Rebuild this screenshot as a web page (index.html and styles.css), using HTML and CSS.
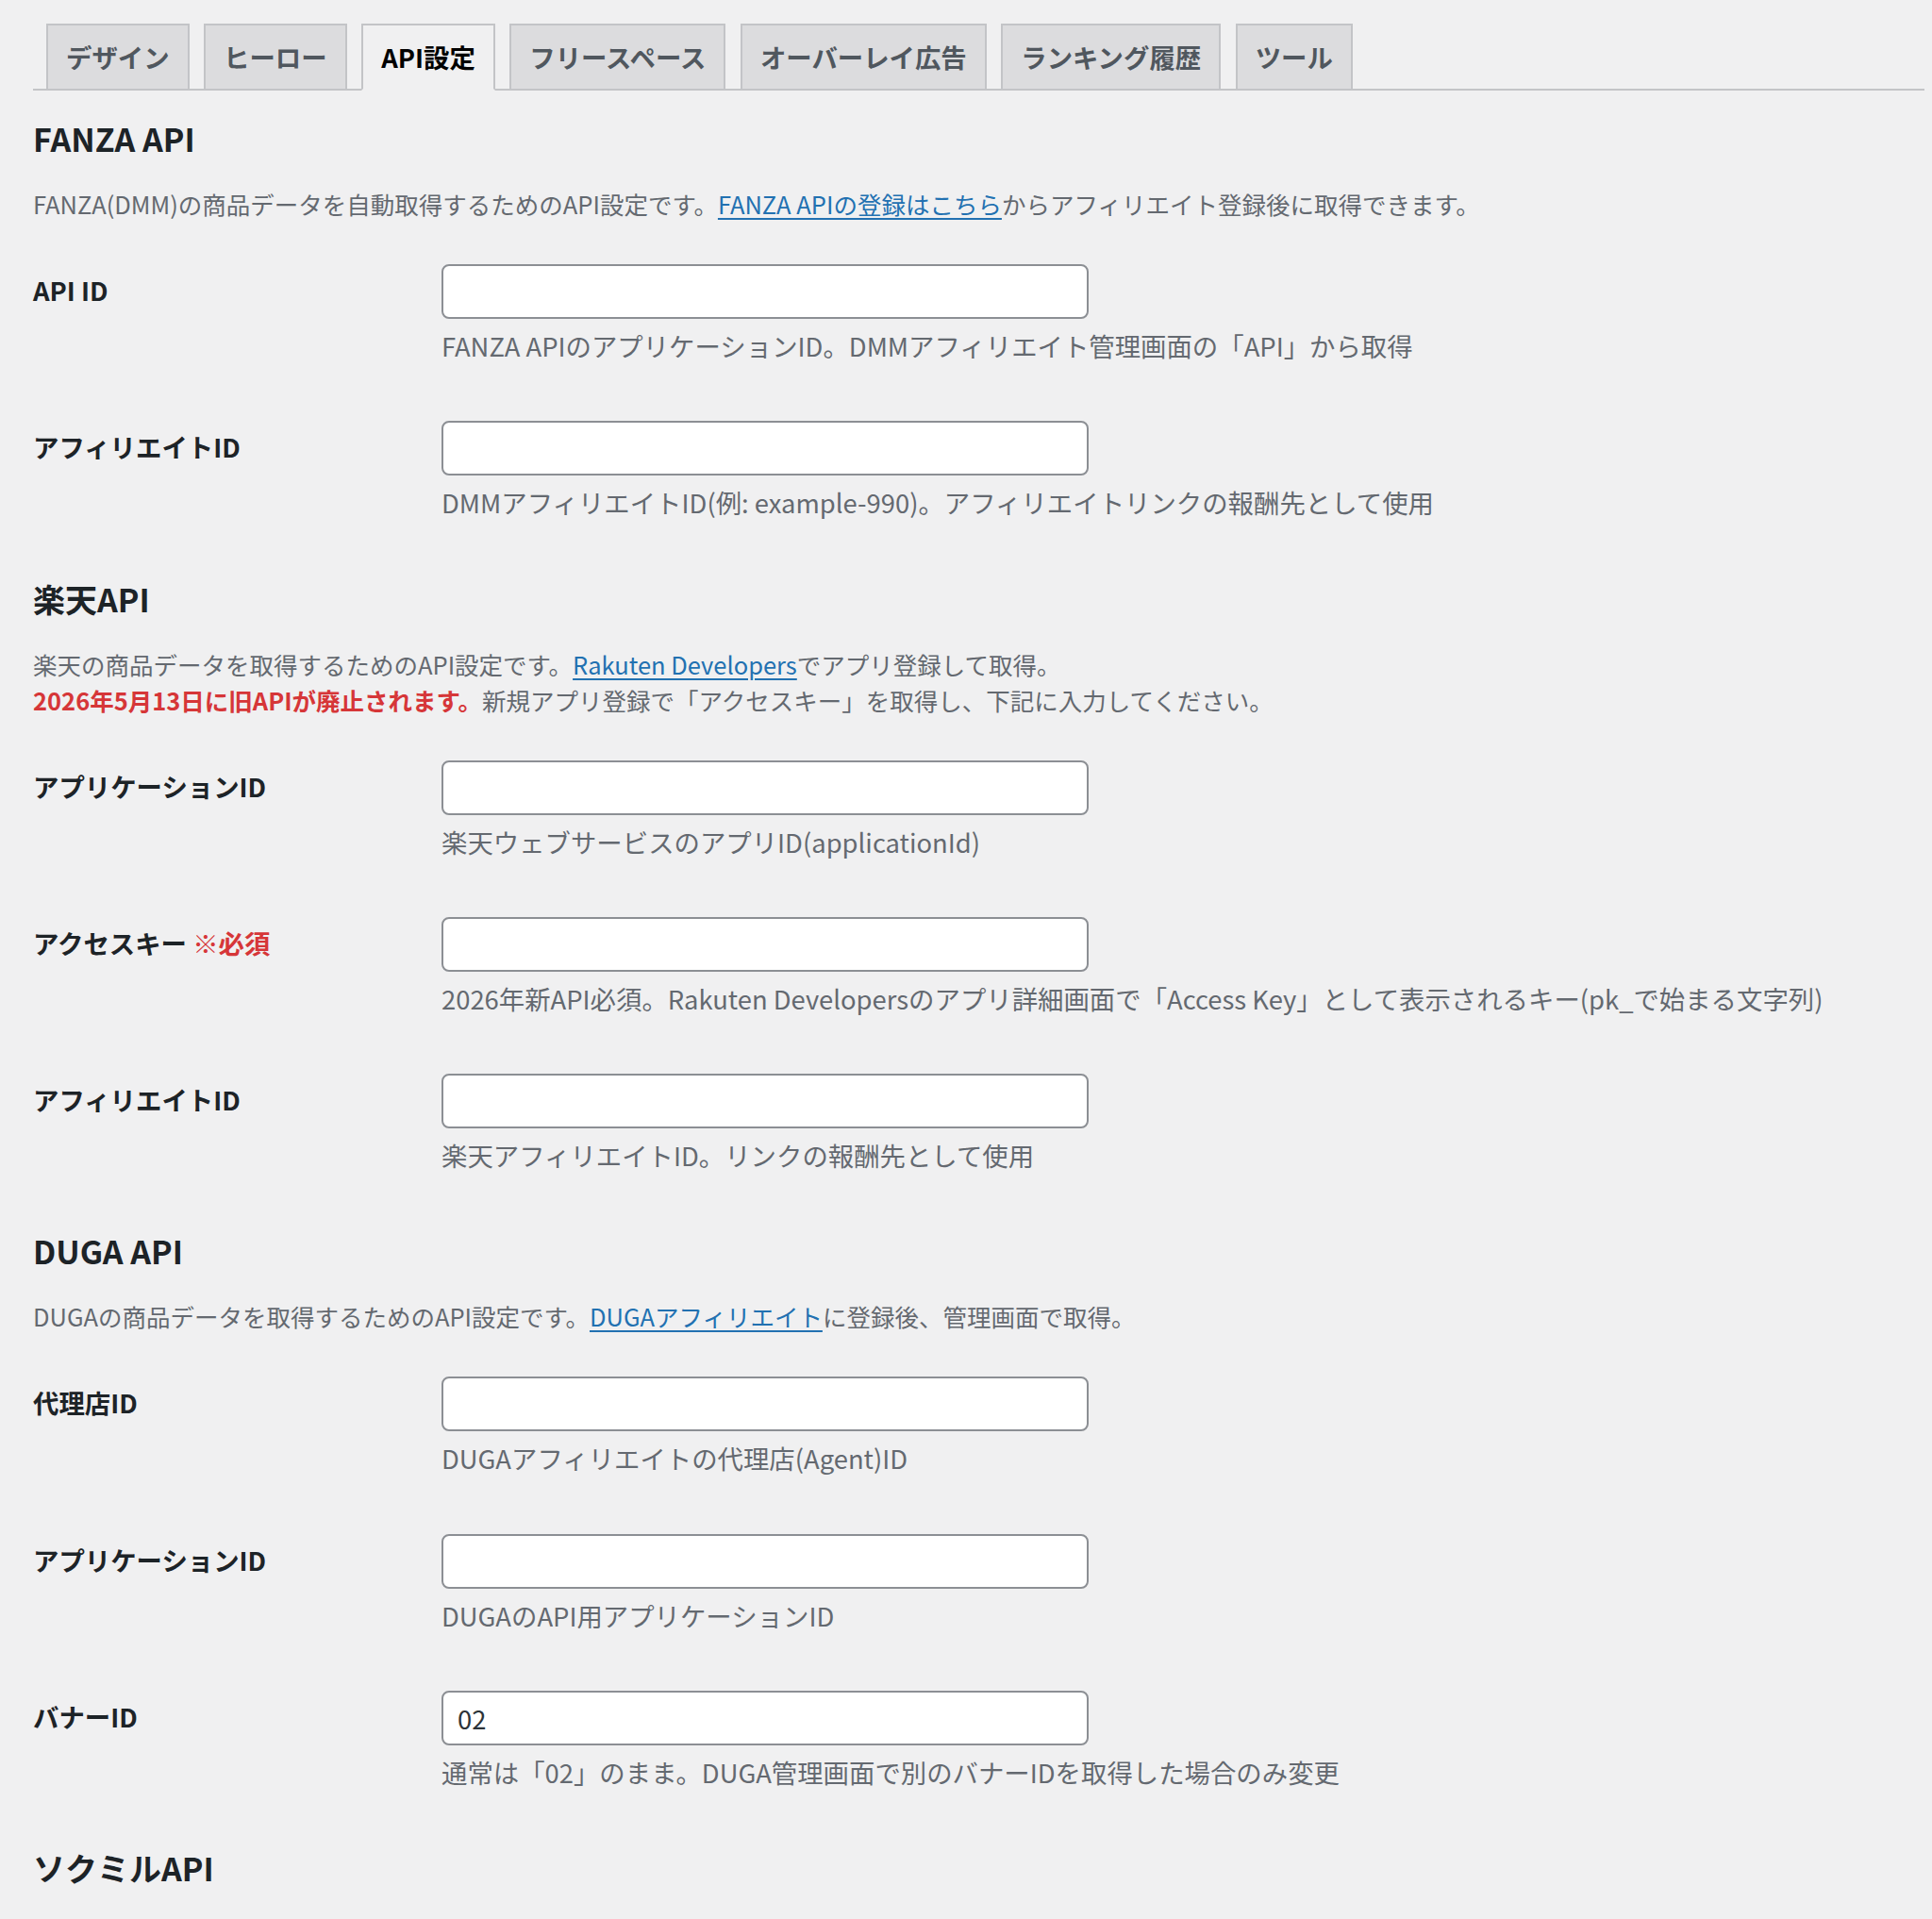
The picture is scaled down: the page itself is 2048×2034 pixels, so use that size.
FILE: index.html
```html
<!DOCTYPE html>
<html lang="ja">
<head>
<meta charset="utf-8">
<title>API設定</title>
<link rel="stylesheet" href="styles.css">
</head>
<body>
<div class="wrap">
  <nav class="tabs">
    <a class="tab" href="#">デザイン</a>
    <a class="tab" href="#">ヒーロー</a>
    <a class="tab tab-active" href="#">API設定</a>
    <a class="tab" href="#">フリースペース</a>
    <a class="tab" href="#">オーバーレイ広告</a>
    <a class="tab" href="#">ランキング履歴</a>
    <a class="tab" href="#">ツール</a>
  </nav>

  <h2 class="section-title">FANZA API</h2>
  <p class="section-desc">FANZA(DMM)の商品データを自動取得するためのAPI設定です。<a href="#">FANZA APIの登録はこちら</a>からアフィリエイト登録後に取得できます。</p>
  <div class="form">
    <div class="row">
      <label class="label">API ID</label>
      <div class="field">
        <input class="text-input" type="text">
        <p class="description">FANZA APIのアプリケーションID。DMMアフィリエイト管理画面の「API」から取得</p>
      </div>
    </div>
    <div class="row">
      <label class="label">アフィリエイトID</label>
      <div class="field">
        <input class="text-input" type="text">
        <p class="description">DMMアフィリエイトID(例: example-990)。アフィリエイトリンクの報酬先として使用</p>
      </div>
    </div>
  </div>

  <h2 class="section-title">楽天API</h2>
  <p class="section-desc">楽天の商品データを取得するためのAPI設定です。<a href="#">Rakuten Developers</a>でアプリ登録して取得。<br><strong class="warn">2026年5月13日に旧APIが廃止されます。</strong>新規アプリ登録で「アクセスキー」を取得し、下記に入力してください。</p>
  <div class="form">
    <div class="row">
      <label class="label">アプリケーションID</label>
      <div class="field">
        <input class="text-input" type="text">
        <p class="description">楽天ウェブサービスのアプリID(applicationId)</p>
      </div>
    </div>
    <div class="row">
      <label class="label">アクセスキー <span class="required">※必須</span></label>
      <div class="field">
        <input class="text-input" type="text">
        <p class="description">2026年新API必須。Rakuten Developersのアプリ詳細画面で「Access Key」として表示されるキー(pk_で始まる文字列)</p>
      </div>
    </div>
    <div class="row">
      <label class="label">アフィリエイトID</label>
      <div class="field">
        <input class="text-input" type="text">
        <p class="description">楽天アフィリエイトID。リンクの報酬先として使用</p>
      </div>
    </div>
  </div>

  <h2 class="section-title">DUGA API</h2>
  <p class="section-desc">DUGAの商品データを取得するためのAPI設定です。<a href="#">DUGAアフィリエイト</a>に登録後、管理画面で取得。</p>
  <div class="form">
    <div class="row">
      <label class="label">代理店ID</label>
      <div class="field">
        <input class="text-input" type="text">
        <p class="description">DUGAアフィリエイトの代理店(Agent)ID</p>
      </div>
    </div>
    <div class="row">
      <label class="label">アプリケーションID</label>
      <div class="field">
        <input class="text-input" type="text">
        <p class="description">DUGAのAPI用アプリケーションID</p>
      </div>
    </div>
    <div class="row">
      <label class="label">バナーID</label>
      <div class="field">
        <input class="text-input" type="text" value="02">
        <p class="description">通常は「02」のまま。DUGA管理画面で別のバナーIDを取得した場合のみ変更</p>
      </div>
    </div>
  </div>

  <h2 class="section-title">ソクミルAPI</h2>
</div>
</body>
</html>
```

FILE: styles.css
```css
html, body {
  margin: 0;
  padding: 0;
  background: #f0f0f1;
}

body {
  font-family: "Noto Sans CJK JP", "Noto Sans", sans-serif;
  color: #3c434a;
  height: 2034px;
  overflow: hidden;
}

.wrap {
  padding: 25px 8px 0 35px;
}

/* Tabs */
.tabs {
  display: flex;
  border-bottom: 2px solid #c3c4c7;
}

.tab {
  display: block;
  margin: 0 0 -2px 15.5px;
  padding: 10px 19px;
  border: 2px solid #c3c4c7;
  background: #dcdcde;
  color: #50575e;
  font-size: 27.4px;
  line-height: 47px;
  font-weight: 700;
  text-decoration: none;
  white-space: nowrap;
}

.tab:first-child {
  margin-left: 14px;
}

.tab-active {
  background: #f0f0f1;
  border-bottom-color: #f0f0f1;
  color: #000;
}

/* Sections */
.section-title {
  margin: 33px 0 32px;
  font-size: 34px;
  line-height: 36px;
  font-weight: 700;
  color: #1d2327;
}

.section-desc {
  margin: 0 0 16px;
  font-size: 25.5px;
  line-height: 38px;
  color: #646970;
}

.section-desc a,
.description a {
  color: #2271b1;
  text-decoration: underline;
  text-underline-offset: 4px;
}

.warn {
  color: #d63638;
  font-weight: 700;
}

/* Form rows */
.row {
  display: grid;
  grid-template-columns: 412px 1fr;
}

.label {
  padding-top: 38px;
  font-size: 27.4px;
  line-height: 36px;
  font-weight: 700;
  color: #1d2327;
}

.required {
  color: #d63638;
}

.field {
  padding: 29px 0 30.25px 21px;
}

.text-input {
  display: block;
  box-sizing: border-box;
  width: 686px;
  height: 58px;
  margin: 0;
  padding: 0 15px;
  border: 2px solid #8c8f94;
  border-radius: 8px;
  background: #fff;
  font-family: inherit;
  font-size: 27.4px;
  color: #2c3338;
  outline: none;
}

.description {
  margin: 7px 0 0;
  font-size: 27.4px;
  line-height: 42px;
  color: #646970;
}
```
